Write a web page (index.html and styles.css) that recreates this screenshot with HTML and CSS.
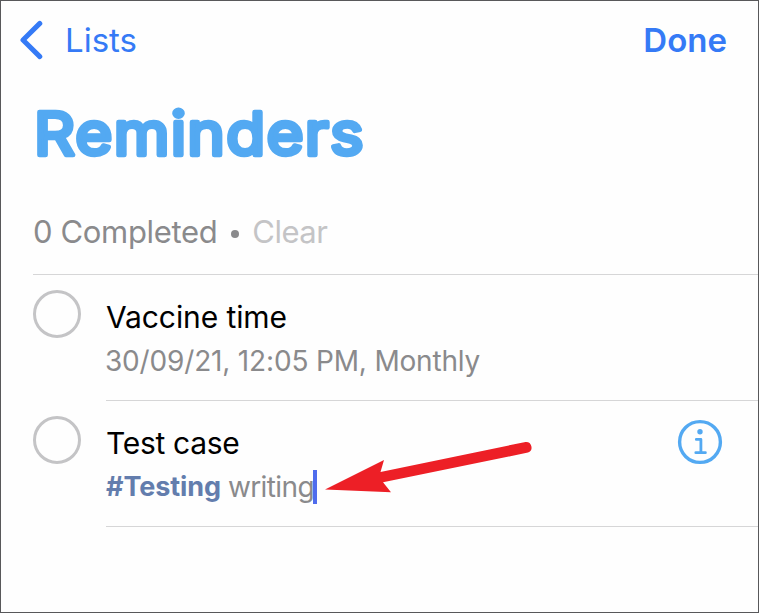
FILE: index.html
```html
<!DOCTYPE html>
<html lang="en">
<head>
    <meta charset="UTF-8">
    <meta name="viewport" content="width=device-width, initial-scale=1.0">
    <title>Reminders</title>
    <link rel="stylesheet" href="styles.css">
</head>
<body>
    <header class="navbar">
        <a class="back">
            <svg width="24" height="40" viewBox="0 0 24 40">
                <path d="M20.8 3.4 L4 20 L20.8 36.6"/>
            </svg>
            <span class="back-label">Lists</span>
        </a>
        <a class="done">Done</a>
    </header>

    <h1>
        <svg width="400" height="108">
            <text x="1" y="75.5" textLength="308" transform="scale(1.07 1)">Reminders</text>
        </svg>
    </h1>

    <div class="summary">
        <span class="completed">0 Completed</span>
        <span class="bullet"></span>
        <span class="clear">Clear</span>
    </div>

    <ul class="reminders">
        <li class="reminder">
            <span class="circle"></span>
            <div class="details">
                <div class="title">Vaccine time</div>
                <div class="note date">30/09/21, 12:05 PM, Monthly</div>
            </div>
        </li>
        <li class="reminder">
            <span class="circle"></span>
            <div class="details">
                <div class="title editing">Test case</div>
                <div class="note"><span class="tag">#Testing</span><span class="text">writing</span><span class="caret"></span></div>
                <svg class="info" width="46" height="46" viewBox="0 0 46 46">
                    <circle class="ring" cx="23" cy="23" r="20.4"/>
                    <circle class="dot" cx="23" cy="12.8" r="2.7"/>
                    <path d="M19.3 20.4 H23.9 V33.7 M18.8 33.7 H28.4"/>
                </svg>
            </div>
        </li>
    </ul>

    <svg class="arrow" width="210" height="60" viewBox="0 0 210 60">
        <path d="M1 49.4 L60 20 L56.5 32 L201.5 2 A5.5 5.5 0 0 1 204 12.6 L59 42.3 L67 52.3 Z"/>
    </svg>
</body>
</html>
```

FILE: styles.css
```css
* {
    box-sizing: border-box;
}

body {
    position: relative;
    margin: 0;
    height: 613px;
    border: 1px solid #58585a;
    background: #fefefe;
    font-family: Inter, "Liberation Sans", sans-serif;
    overflow: hidden;
}

.navbar {
    display: flex;
    justify-content: space-between;
    align-items: center;
    height: 77px;
    padding: 0 31px 0 18px;
    color: #357af6;
    font-size: 33px;
}

.back {
    display: flex;
    align-items: center;
    gap: 22px;
}

.back path {
    fill: none;
    stroke: #357af6;
    stroke-width: 5;
    stroke-linecap: round;
    stroke-linejoin: round;
}

.done {
    font-weight: 600;
}

h1 {
    margin: 2px 0 0;
    padding-left: 32px;
    height: 108px;
    font-size: 59.5px;
}

h1 svg {
    display: block;
}

/* Thick round stroke gives the letters soft corners */
h1 text {
    font-weight: 400;
    fill: #53a9f2;
    stroke: #53a9f2;
    stroke-width: 4.5px;
    stroke-linejoin: round;
}

.summary {
    display: flex;
    align-items: center;
    height: 87px;
    margin-left: 32px;
    border-bottom: 1px solid #d6d6d7;
    font-size: 31px;
    letter-spacing: -0.35px;
    color: #8a8a8c;
}

.bullet {
    width: 8px;
    height: 8px;
    margin: 5px 14px 0 14px;
    border-radius: 50%;
    background: #8a8a8c;
}

.clear {
    margin-left: -1px;
    letter-spacing: -0.5px;
    color: #c4c4c6;
}

.reminders {
    margin: 0;
    padding: 0 0 0 32px;
    list-style: none;
}

.reminder {
    display: flex;
    gap: 25px;
    height: 126px;
}

.circle {
    flex: none;
    width: 48px;
    height: 48px;
    margin-top: 15px;
    border: 3px solid #c4c4c6;
    border-radius: 50%;
}

.details {
    position: relative;
    flex: 1;
    padding-top: 20px;
    border-bottom: 1px solid #d6d6d7;
}

.title {
    font-size: 30px;
    line-height: 44px;
    letter-spacing: -0.1px;
    color: #000;
}

.editing {
    letter-spacing: -0.3px;
}

.note {
    display: flex;
    align-items: center;
    margin-left: -1px;
    font-size: 28px;
    line-height: 44px;
    letter-spacing: -0.6px;
    color: #8a8a8c;
}

.date {
    letter-spacing: -0.17px;
}

.tag {
    margin: 0 7px 0 1px;
    font-size: 27px;
    font-weight: 700;
    letter-spacing: -0.1px;
    color: #637dad;
}

.caret {
    width: 4px;
    height: 34px;
    margin-left: -1px;
    background: #4f6ced;
}

.info {
    position: absolute;
    top: 18px;
    right: 35px;
    fill: none;
    stroke: #53a9f2;
    stroke-width: 2.8;
    stroke-linecap: round;
    stroke-linejoin: round;
}

.info .ring {
    stroke-width: 3.4;
}

.info .dot {
    fill: #53a9f2;
    stroke: none;
}

/* Pointer laid over the list */
.arrow {
    position: absolute;
    left: 323px;
    top: 439px;
    fill: #ed1f26;
}
```
